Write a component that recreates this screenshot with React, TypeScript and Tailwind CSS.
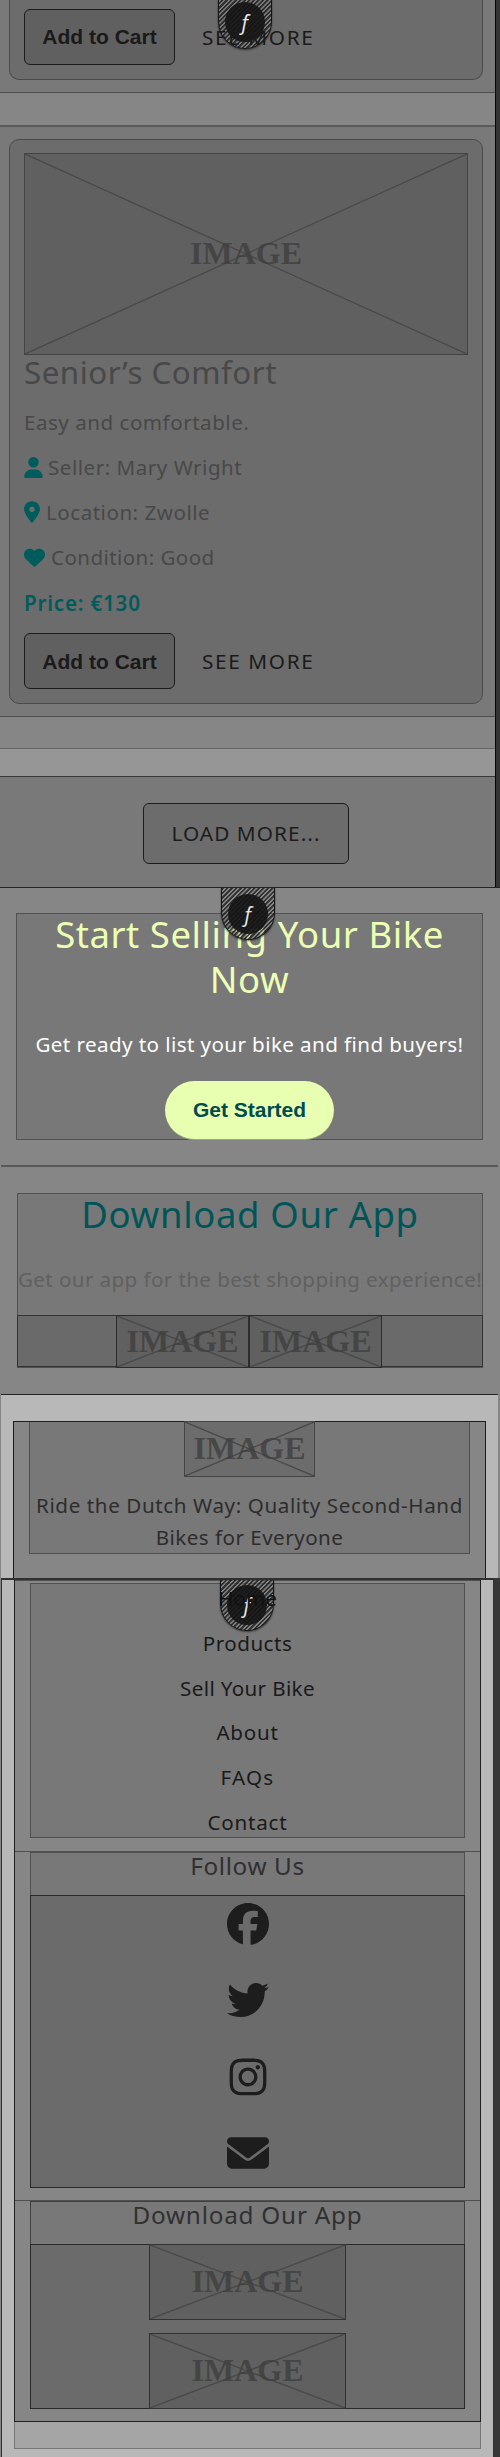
import type { ReactNode } from "react";
import {
  FaEnvelope,
  FaFacebook,
  FaHeart,
  FaInstagram,
  FaLocationDot,
  FaTwitter,
  FaUser,
} from "react-icons/fa6";

function ImageBox({ className }: { className: string }) {
  return (
    <div className={`relative grid shrink-0 place-items-center overflow-hidden border ${className}`}>
      <svg className="absolute inset-0 size-full" viewBox="0 0 100 100" preserveAspectRatio="none">
        <path
          d="M0 0L100 100M100 0L0 100"
          fill="none"
          stroke="#494949"
          strokeWidth="1.3"
          vectorEffect="non-scaling-stroke"
        />
      </svg>
      <span className="-translate-y-[1.5px] font-['Liberation_Serif',serif] text-[32px] leading-none font-bold text-[#3e3e3e]/80">
        IMAGE
      </span>
    </div>
  );
}

function Badge({ className }: { className: string }) {
  return (
    <div
      className={`absolute z-10 flex w-[54px] justify-center rounded-b-[27px] border border-t-0 border-[#151515] bg-[repeating-linear-gradient(135deg,#1d1d1dcc_0px,#1d1d1dcc_1.4px,#8a8a8a73_1.8px,#8a8a8a73_2.9px,#1d1d1dcc_3.2px)] shadow-[0_1px_2px_#0008] ${className}`}
    >
      <div className="grid size-[40px] place-items-center rounded-full bg-[#141414]/90">
        <span className="font-['Open_Sans',sans-serif] text-[21px] leading-none text-[#e6e6e6] italic">ƒ</span>
      </div>
    </div>
  );
}

function CartActions() {
  return (
    <div className="flex items-center">
      <button className="h-[56px] w-[151px] rounded-[6px] border border-[#1c1c1c] bg-[#606060] font-['Liberation_Sans',sans-serif] text-[21px] font-bold text-[#1a1a1a]">
        Add to Cart
      </button>
      <a className="relative z-20 ml-[27px] text-[20.8px] leading-[56px] tracking-[1.6px] text-[#1a1a1a]">SEE MORE</a>
    </div>
  );
}

function Detail({ icon, children }: { icon: ReactNode; children: ReactNode }) {
  return (
    <li className="flex h-[45.2px] items-center text-[20.6px] leading-[45.2px]">
      <span className="text-[#005c5c]">{icon}</span>
      {children}
    </li>
  );
}

function ProductSection() {
  return (
    <section className="flex h-[888px] border-b border-[#242424]">
      <div className="w-[495px] bg-[#797979]">
        <div className="h-[93px] border-b border-[#4f4f4f]">
          <div className="mr-[12px] ml-[9px] h-[80px] rounded-b-[10px] border border-t-0 border-[#4b4b4b] bg-[#6c6c6c] pt-[9px] pl-[14px]">
            <CartActions />
          </div>
        </div>
        <div className="h-[32px] bg-[#868686]" />
        <div className="h-[592px] border-t-2 border-b border-t-[#5a5a5a] border-b-[#4f4f4f] pt-[12px]">
          <article className="mr-[12px] ml-[9px] h-[565px] rounded-[10px] border border-[#4b4b4b] bg-[#6c6c6c] px-[14px] pt-[13px] text-[#484848]">
            <ImageBox className="h-[202px] w-[444px] border-[#444] bg-[#606060]" />
            <h2 className="h-[44.5px] text-[31.3px] leading-[34px] tracking-[0.5px]">Senior’s Comfort</h2>
            <p className="text-[20.6px] leading-[45.2px] tracking-[0.5px]">Easy and comfortable.</p>
            <ul>
              <Detail icon={<FaUser className="h-[21px] w-[19px]" />}>
                <span className="ml-[5px] tracking-[0.5px]">Seller: Mary Wright</span>
              </Detail>
              <Detail icon={<FaLocationDot className="h-[22px] w-[16px]" />}>
                <span className="ml-[6px] tracking-[0.5px]">Location: Zwolle</span>
              </Detail>
              <Detail icon={<FaHeart className="size-[21px]" />}>
                <span className="ml-[6px] tracking-[0.4px]">Condition: Good</span>
              </Detail>
            </ul>
            <p className="h-[53.2px] text-[20.6px] leading-[46.2px] font-semibold tracking-[0.8px] text-[#005c5c]">
              Price: €130
            </p>
            <CartActions />
          </article>
        </div>
        <div className="h-[32px] border-b border-[#666] bg-[#868686]" />
        <div className="h-[28px] border-b border-[#383838] bg-[#969696]" />
        <div className="flex justify-center pt-[26px] pr-[3px]">
          <button className="h-[61px] w-[206px] rounded-[6px] border border-[#1c1c1c] bg-[#6c6c6c] text-[20.8px] tracking-[1.05px] text-[#1c1c1c]">
            LOAD MORE...
          </button>
        </div>
      </div>
      <div className="w-[5px] border-l border-[#050505] bg-[#343434]" />
    </section>
  );
}

function SellSection() {
  return (
    <section className="relative h-[277px] bg-[#868686] pt-[25px]">
      <Badge className="top-0 left-[221px] h-[52px] pt-[6px]" />
      <div className="mr-[17px] ml-[16px] h-[227px] border border-[#515151] bg-[#787878] text-center">
        <h2 className="-mt-[2px] text-[36.5px] leading-[45px] tracking-[0.55px] text-[#ecffb4]">
          Start Selling Your Bike
          <br />
          Now
        </h2>
        <p className="mt-[18px] h-[61px] text-[20.6px] leading-[48px] tracking-[0.41px] whitespace-nowrap text-white">
          Get ready to list your bike and find buyers!
        </p>
        <button className="h-[59px] w-[169px] rounded-full border-b border-[#98a873] bg-[#e8ffb2] font-['Liberation_Sans',sans-serif] text-[21px] font-bold text-[#004b50]">
          Get Started
        </button>
      </div>
    </section>
  );
}

function DownloadSection() {
  return (
    <section className="mr-[2px] ml-[1px] h-[230px] border-t-2 border-b border-t-[#595959] border-b-[#242424] bg-[#868686] pt-[26px]">
      <div className="mr-[15px] ml-[16px] flex h-[175px] flex-col border border-[#515151] bg-[#787878] text-center">
        <h2 className="-mt-[3px] h-[60px] text-[36.5px] leading-[46px] tracking-[0.65px] text-[#005558]">Download Our App</h2>
        <p className="h-[66px] self-center text-[20.6px] leading-[59px] tracking-[0.4px] whitespace-nowrap text-[#606060]">
          Get our app for the best shopping experience!
        </p>
        <div className="-mx-px flex h-[52px] justify-center border border-[#333] bg-[#6a6a6a] pr-[2px]">
          <ImageBox className="-mt-px h-[53px] w-[133px] border-[#2c2c2c] bg-[#606060]" />
          <ImageBox className="-mt-px h-[53px] w-[133px] border-[#2c2c2c] bg-[#606060]" />
        </div>
      </div>
    </section>
  );
}

function FooterIntro() {
  return (
    <section className="h-[183px] border-r-2 border-l border-[#868686] bg-[#b8b8b8] pt-[26px]">
      <div className="mr-[12px] ml-[12px] h-full border border-b-0 border-[#1d1d1d] bg-[#868686] px-[15px]">
        <div className="flex h-[132px] flex-col items-center border border-t-0 border-[#505050] bg-[#787878] text-center text-[20.6px] leading-[32.2px] text-[#2d2d2d]">
          <ImageBox className="-mt-px h-[56px] w-[131px] border-[#444] bg-[#6c6c6c]" />
          <p className="mt-[12px] whitespace-nowrap">
            <span className="tracking-[0.6px]">Ride the Dutch Way: Quality Second-Hand</span>
            <br />
            <span className="tracking-[0.47px]">Bikes for Everyone</span>
          </p>
        </div>
      </div>
    </section>
  );
}

function FooterLinks() {
  return (
    <section className="flex h-[879px] bg-[#868686] pl-px">
      <div className="relative w-[493px] border-x border-t-2 border-[#303030] bg-[#b8b8b8] px-[12px]">
        <Badge className="top-0 left-[218px] h-[51px] pt-[5px]" />
        <div className="h-[869px] border border-t-0 border-[#777] bg-[#a5a5a5]">
          <div className="-mx-px h-[842px] border border-t-0 border-[#202020] bg-[#868686]">
            <div className="h-[272px] border-t border-b border-[#505050] px-[15px] pt-[2px]">
              <nav className="flex h-[255px] flex-col border border-[#505050] bg-[#787878] text-center text-[20.6px] leading-[44.8px] text-[#1a1a1a]">
                <a className="relative z-20 -mt-[8px] text-[#111]">Home</a>
                <a className="tracking-[0.5px]">Products</a>
                <a className="tracking-[0.35px]">Sell Your Bike</a>
                <a className="tracking-[0.75px]">About</a>
                <a className="tracking-[1.2px]">FAQs</a>
                <a className="tracking-[0.75px]">Contact</a>
              </nav>
            </div>
            <div className="h-[349px] border-b border-[#505050] px-[15px]">
              <div className="h-[336px] border-x border-t border-[#505050] bg-[#787878]">
                <h3 className="h-[42px] text-center text-[24.3px] leading-[26px] tracking-[0.6px] text-[#303030]">Follow Us</h3>
                <div className="-mx-px flex h-[293px] flex-col items-center border border-[#2a2a2a] bg-[#6b6b6b] text-[#1d1d1d]">
                  <FaFacebook className="mt-[7px] size-[42px]" />
                  <FaTwitter className="mt-[34px] size-[42px]" />
                  <FaInstagram className="mt-[35px] size-[42px]" />
                  <FaEnvelope className="mt-[34px] size-[42px]" />
                </div>
              </div>
            </div>
            <div className="h-[220px] px-[15px]">
              <div className="h-[208px] border-x border-t border-[#404040] bg-[#787878]">
                <h3 className="h-[42px] text-center text-[24.3px] leading-[26px] tracking-[0.77px] text-[#303030]">Download Our App</h3>
                <div className="-mx-px flex h-[165px] flex-col items-center gap-[13px] border border-[#2a2a2a] bg-[#6b6b6b]">
                  <ImageBox className="-mt-px h-[76px] w-[197px] border-[#333] bg-[#606060]" />
                  <ImageBox className="h-[76px] w-[197px] border-[#333] bg-[#606060]" />
                </div>
              </div>
            </div>
          </div>
        </div>
      </div>
      <div className="flex-1 bg-[#373737]" />
    </section>
  );
}

export default function App() {
  return (
    <main className="relative h-[2457px] w-[500px] overflow-hidden bg-[#868686] font-['Noto_Sans',sans-serif]">
      <Badge className="top-[-2px] left-[218px] h-[51px] pt-[4px]" />
      <ProductSection />
      <SellSection />
      <DownloadSection />
      <FooterIntro />
      <FooterLinks />
    </main>
  );
}
